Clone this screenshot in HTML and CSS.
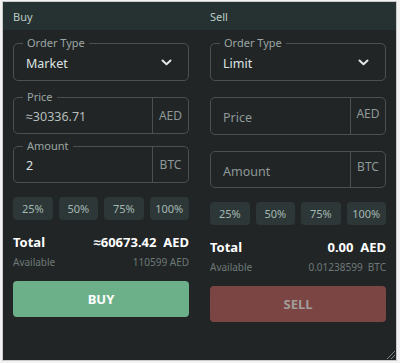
FILE: index.html
```html
<!DOCTYPE html>
<html lang="en">
<head>
    <meta charset="UTF-8">
    <meta name="viewport" content="width=device-width, initial-scale=1.0">
    <title>Buy / Sell</title>
    <link rel="stylesheet" href="styles.css">
</head>
<body>
    <div class="panel">
        <div class="header">
            <span>Buy</span>
            <span>Sell</span>
        </div>

        <div class="columns">
            <!-- Buy side -->
            <div class="side">
                <div class="field order">
                    <span class="legend">Order Type</span>
                    <span class="value">Market</span>
                    <svg class="chevron" width="11" height="7" viewBox="0 0 11 7"><path d="M1.5 1.5 L5.5 5.2 L9.5 1.5" fill="none" stroke="#e4e8e8" stroke-width="2" stroke-linecap="round" stroke-linejoin="round"/></svg>
                </div>

                <div class="field gap-lg">
                    <span class="legend">Price</span>
                    <span class="value muted">&asymp;30336.71</span>
                    <span class="addon">AED</span>
                </div>

                <div class="field">
                    <span class="legend">Amount</span>
                    <span class="value">2</span>
                    <span class="addon">BTC</span>
                </div>

                <div class="percents">
                    <button class="pct">25%</button>
                    <button class="pct">50%</button>
                    <button class="pct">75%</button>
                    <button class="pct">100%</button>
                </div>

                <div class="total">
                    <span>Total</span>
                    <span>&asymp;60673.42&nbsp; AED</span>
                </div>
                <div class="available">
                    <span>Available</span>
                    <span>110599 AED</span>
                </div>

                <button class="action buy">BUY</button>
            </div>

            <!-- Sell side -->
            <div class="side">
                <div class="field order">
                    <span class="legend">Order Type</span>
                    <span class="value">Limit</span>
                    <svg class="chevron" width="11" height="7" viewBox="0 0 11 7"><path d="M1.5 1.5 L5.5 5.2 L9.5 1.5" fill="none" stroke="#e4e8e8" stroke-width="2" stroke-linecap="round" stroke-linejoin="round"/></svg>
                </div>

                <div class="field gap-lg tall">
                    <span class="value placeholder">Price</span>
                    <span class="addon high">AED</span>
                </div>

                <div class="field gap-lg">
                    <span class="value placeholder">Amount</span>
                    <span class="addon high">BTC</span>
                </div>

                <div class="percents">
                    <button class="pct">25%</button>
                    <button class="pct">50%</button>
                    <button class="pct">75%</button>
                    <button class="pct">100%</button>
                </div>

                <div class="total">
                    <span>Total</span>
                    <span>0.00&nbsp; AED</span>
                </div>
                <div class="available">
                    <span>Available</span>
                    <span>0.01238599&nbsp; BTC</span>
                </div>

                <button class="action sell">SELL</button>
            </div>
        </div>

        <svg class="grip" width="12" height="12" viewBox="0 0 12 12"><path d="M11 3 L3 11 M11 7 L7 11" stroke="#7c8584" stroke-width="1"/></svg>
    </div>
</body>
</html>
```

FILE: styles.css
```css
body {
    margin: 0;
    background-color: #f2f2f2;
    font-family: "Noto Sans", Arial, sans-serif;
}
.panel {
    position: relative;
    margin: 2px 4px 3px 3px;
    height: 358px;
    background-color: #212526;
    box-shadow: 0 0 0 1px #c9cbcb;
}
.header {
    display: grid;
    grid-template-columns: 1fr 1fr;
    gap: 21px;
    height: 28px;
    padding: 0 10px;
    align-items: center;
    background-color: #263231;
    color: #b9cbc6;
    font-size: 11px;
}
.columns {
    display: grid;
    grid-template-columns: 1fr 1fr;
    gap: 21px;
    padding: 13px 10px 0;
}
.side {
    display: flex;
    flex-direction: column;
}
.field {
    position: relative;
    display: flex;
    align-items: center;
    box-sizing: border-box;
    height: 37px;
    margin-top: 12px;
    border: 1px solid #4a5151;
    border-radius: 5px;
}
.field.order {
    height: 38px;
    margin-top: 0;
}
.field.gap-lg {
    margin-top: 16px;
}
.field.tall {
    height: 38px;
}
.legend {
    position: absolute;
    top: -8px;
    left: 9px;
    padding: 0 4px;
    background-color: #212526;
    color: #9ba5a3;
    font-size: 11px;
    line-height: 14px;
}
.value {
    flex: 1;
    padding-left: 12px;
    padding-top: 2px;
    color: #dfe3e2;
    font-size: 12.5px;
}
.value.muted {
    color: #b5bdbb;
}
.value.placeholder {
    color: #8f9997;
    padding-top: 3px;
}
.chevron {
    margin-right: 16px;
}
.addon {
    display: flex;
    align-items: center;
    justify-content: center;
    align-self: stretch;
    width: 35px;
    border-left: 1px solid #4a5151;
    color: #8e9997;
    font-size: 12px;
}
.addon.high {
    padding-bottom: 6px;
    width: 34px;
}
.percents {
    display: grid;
    grid-template-columns: repeat(4, 1fr);
    gap: 6px;
    margin-top: 14px;
}
.pct {
    height: 23px;
    padding: 0;
    border: none;
    border-radius: 4px;
    background-color: #2d3737;
    color: #a4b8b3;
    font-family: inherit;
    font-size: 11px;
}
.total {
    display: flex;
    justify-content: space-between;
    margin-top: 13px;
    line-height: 18px;
    color: #ffffff;
    font-size: 13px;
    font-weight: bold;
}
.available {
    display: flex;
    justify-content: space-between;
    margin-top: 4px;
    line-height: 14px;
    color: #6d7977;
    font-size: 10px;
}
.action {
    height: 36px;
    margin-top: 12px;
    border: none;
    border-radius: 4px;
    font-family: inherit;
    font-size: 13px;
    font-weight: bold;
}
.buy {
    background-color: #6cb08a;
    color: #ffffff;
}
.sell {
    background-color: #7b4543;
    color: #a29c9a;
}
.grip {
    position: absolute;
    right: 0;
    bottom: 0;
}
```
